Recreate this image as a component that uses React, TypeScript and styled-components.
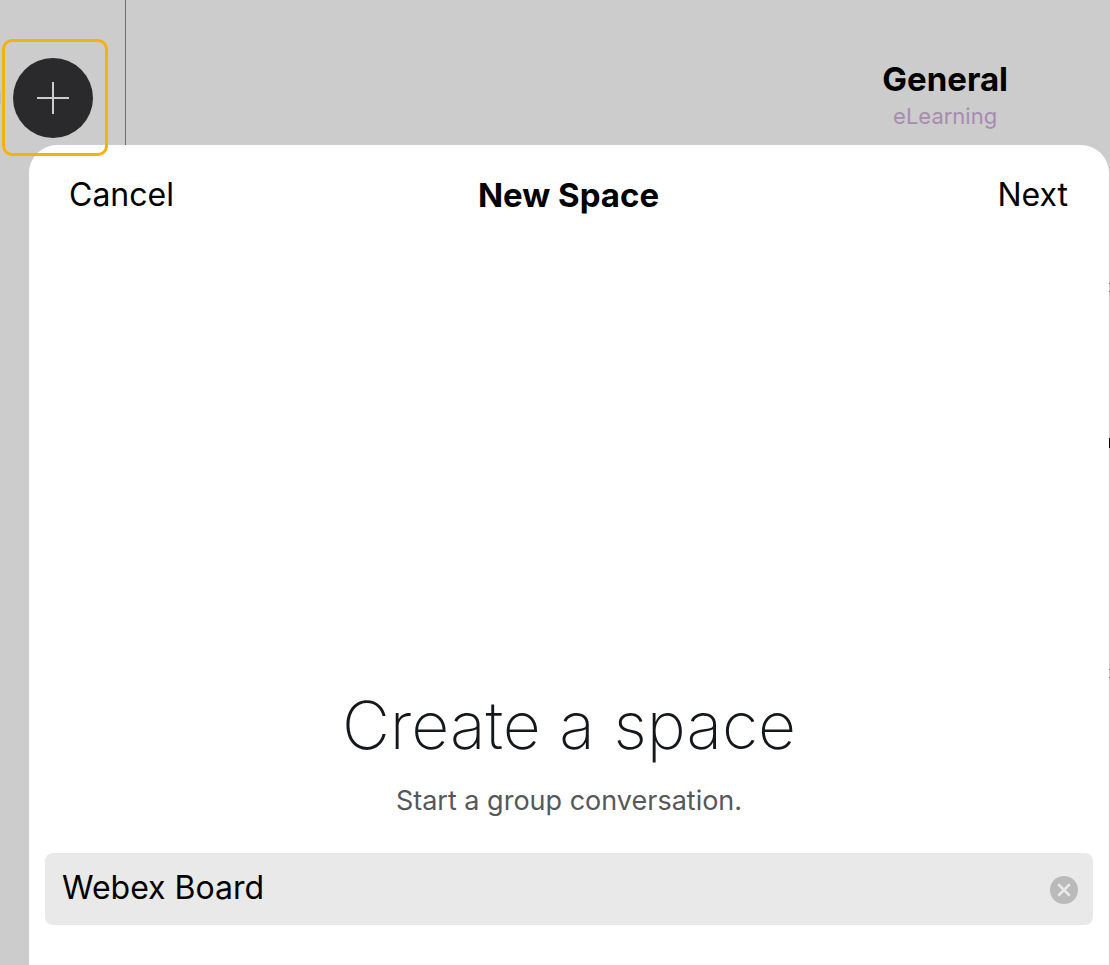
import React, { useState } from "react";
import styled, { createGlobalStyle } from "styled-components";

const GlobalStyle = createGlobalStyle`
  *, *::before, *::after { box-sizing: border-box; }
  body {
    margin: 0;
    background: #cccccc;
    color: #000000;
    font-family: Inter, "Liberation Sans", sans-serif;
  }
  button, input { font: inherit; color: inherit; }
`;

const Page = styled.div`
  position: relative;
  display: flex;
  flex-direction: column;
  min-height: 100vh;
  overflow: hidden;
  background: #cccccc;
`;

const TopBar = styled.header`
  display: flex;
  height: 145px;
`;

const Rail = styled.nav`
  flex: 0 0 126px;
  padding: 39px 0 0 2px;
  border-right: 1px solid #6d6d6d;
`;

const Highlight = styled.div`
  position: relative;
  z-index: 2;
  width: 106px;
  height: 117px;
  padding: 16px 8px;
  border: 3px solid #f5b20f;
  border-radius: 10px;
`;

const AddButton = styled.button`
  display: flex;
  align-items: center;
  justify-content: center;
  width: 80px;
  height: 80px;
  padding: 0;
  border: 0;
  border-radius: 50%;
  background: #2a2a2c;
  color: #cccccc;
`;

const Channel = styled.div`
  margin: 58px 102px 0 auto;
  text-align: center;
`;

const ChannelName = styled.h1`
  margin: 0;
  font-size: 33px;
  line-height: 42px;
  font-weight: 700;
`;

const TeamName = styled.p`
  margin: 3px 0 0;
  font-size: 22px;
  line-height: 26px;
  color: #a78bb0;
`;

const Sheet = styled.main`
  position: relative;
  z-index: 1;
  display: flex;
  flex: 1;
  flex-direction: column;
  margin: 0 1px 0 29px;
  padding: 0 16px 40px;
  border-radius: 28px 28px 0 0;
  background: #ffffff;
`;

const SheetBar = styled.div`
  display: grid;
  grid-template-columns: 1fr auto 1fr;
  align-items: center;
  height: 100px;
  padding: 0 25px 0 24px;
`;

const TextButton = styled.button<{ $end?: boolean }>`
  justify-self: ${(p) => (p.$end ? "end" : "start")};
  padding: 0;
  border: 0;
  background: none;
  font-size: 32px;
  line-height: 42px;
`;

const SheetTitle = styled.h2`
  margin: 0;
  font-size: 33px;
  line-height: 42px;
  font-weight: 700;
`;

const Intro = styled.section`
  display: flex;
  flex: 1;
  flex-direction: column;
  justify-content: flex-end;
  text-align: center;
`;

const Headline = styled.h3`
  margin: 0;
  font-size: 66px;
  line-height: 88px;
  font-weight: 200;
  color: #14171c;
`;

const Hint = styled.p`
  margin: 14px 0 34px;
  font-size: 27px;
  line-height: 36px;
  color: #55585b;
`;

const Field = styled.div`
  display: flex;
  align-items: center;
  height: 72px;
  padding: 0 15px 0 17px;
  border-radius: 8px;
  background: #e9e9e9;
`;

const NameInput = styled.input`
  flex: 1;
  min-width: 0;
  height: 68px;
  padding: 0 0 4px;
  border: 0;
  outline: 0;
  background: none;
  font-size: 32px;
`;

const ClearButton = styled.button`
  display: flex;
  padding: 2px 0 0;
  border: 0;
  background: none;
`;

const EdgeMark = styled.span<{ $top: number; $height: number; $color: string; $left?: boolean }>`
  position: absolute;
  ${(p) => (p.$left ? "left: 0;" : "right: 0;")}
  top: ${(p) => p.$top}px;
  width: 1px;
  height: ${(p) => p.$height}px;
  background: ${(p) => p.$color};
`;

export default function App() {
  const [name, setName] = useState("Webex Board");

  return (
    <>
      <GlobalStyle />
      <Page>
        <TopBar>
          <Rail>
            <Highlight>
              <AddButton type="button" aria-label="Add">
                <svg width="32" height="32" viewBox="0 0 32 32" fill="currentColor" aria-hidden="true">
                  <rect x="15" y="0" width="2" height="32" />
                  <rect x="0" y="15" width="32" height="2" />
                </svg>
              </AddButton>
            </Highlight>
          </Rail>
          <Channel>
            <ChannelName>General</ChannelName>
            <TeamName>eLearning</TeamName>
          </Channel>
        </TopBar>

        {/* Slivers of the conversation that show beside the sheet */}
        <EdgeMark $left $top={92} $height={12} $color="#b9bdc4" />
        <EdgeMark $top={283} $height={1} $color="#666666" />
        <EdgeMark $top={291} $height={1} $color="#666666" />
        <EdgeMark $top={438} $height={10} $color="#000000" />
        <EdgeMark $top={669} $height={1} $color="#666666" />
        <EdgeMark $top={677} $height={1} $color="#666666" />

        <Sheet>
          <SheetBar>
            <TextButton type="button">Cancel</TextButton>
            <SheetTitle>New Space</SheetTitle>
            <TextButton type="button" $end>Next</TextButton>
          </SheetBar>
          <Intro>
            <Headline>Create a space</Headline>
            <Hint>Start a group conversation.</Hint>
          </Intro>
          <Field>
            <NameInput
              type="text"
              aria-label="Space name"
              value={name}
              onChange={(e) => setName(e.target.value)}
            />
            <ClearButton type="button" aria-label="Clear text" onClick={() => setName("")}>
              <svg width="28" height="28" viewBox="0 0 28 28" aria-hidden="true">
                <circle cx="14" cy="14" r="14" fill="#bababa" />
                <path d="M9 9l10 10M19 9L9 19" stroke="#e9e9e9" strokeWidth="2.6" strokeLinecap="round" />
              </svg>
            </ClearButton>
          </Field>
        </Sheet>
      </Page>
    </>
  );
}
